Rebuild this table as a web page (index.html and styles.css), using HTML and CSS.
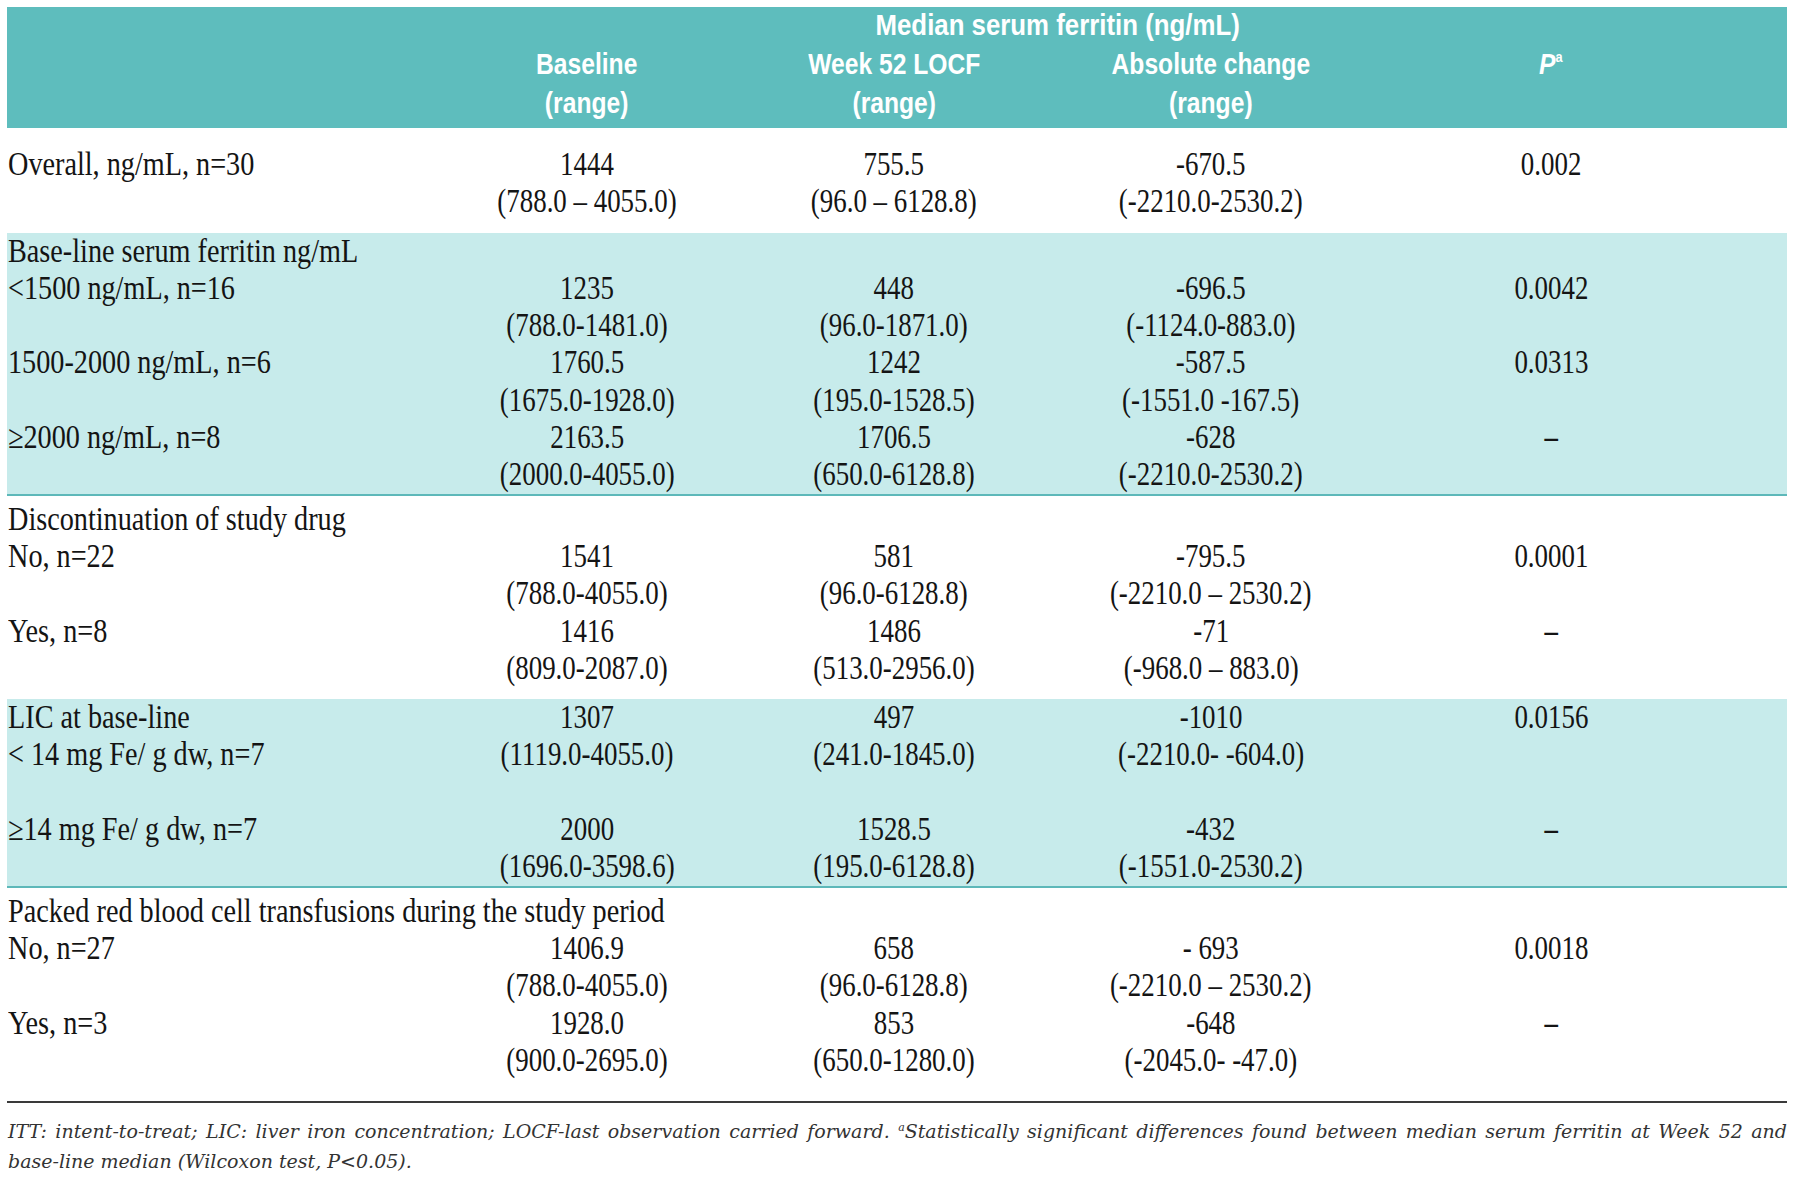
FILE: index.html
```html
<!DOCTYPE html>
<html>
<head>
<meta charset="utf-8">
<link rel="stylesheet" href="styles.css">
</head>
<body>
<div class="doc">
  <div class="thead">
    <div class="cols hrow-top">
      <div class="hspan"><span class="h hm">Median serum ferritin (ng/mL)</span></div>
    </div>
    <div class="cols hrow">
      <div></div>
      <div class="hc"><span class="h">Baseline<br>(range)</span></div>
      <div class="hc"><span class="h">Week 52 LOCF<br>(range)</span></div>
      <div class="hc"><span class="h">Absolute change<br>(range)</span></div>
      <div class="hc"><span class="h"><i>P</i><sup class="hsup">a</sup></span></div>
    </div>
  </div>

  <div class="sec s1">
    <div class="cols">
      <div class="lab"><span class="t">Overall, ng/mL, n=30</span></div>
      <div class="num"><span class="n">1444<br>(788.0 – 4055.0)</span></div>
      <div class="num"><span class="n">755.5<br>(96.0 – 6128.8)</span></div>
      <div class="num"><span class="n">-670.5<br>(-2210.0-2530.2)</span></div>
      <div class="num"><span class="n">0.002</span></div>
    </div>
  </div>

  <div class="sec tint s2">
    <div class="full"><span class="t">Base-line serum ferritin ng/mL</span></div>
    <div class="cols">
      <div class="lab"><span class="t">&lt;1500 ng/mL, n=16</span></div>
      <div class="num"><span class="n">1235<br>(788.0-1481.0)</span></div>
      <div class="num"><span class="n">448<br>(96.0-1871.0)</span></div>
      <div class="num"><span class="n">-696.5<br>(-1124.0-883.0)</span></div>
      <div class="num"><span class="n">0.0042</span></div>
    </div>
    <div class="cols">
      <div class="lab"><span class="t">1500-2000 ng/mL, n=6</span></div>
      <div class="num"><span class="n">1760.5<br>(1675.0-1928.0)</span></div>
      <div class="num"><span class="n">1242<br>(195.0-1528.5)</span></div>
      <div class="num"><span class="n">-587.5<br>(-1551.0 -167.5)</span></div>
      <div class="num"><span class="n">0.0313</span></div>
    </div>
    <div class="cols">
      <div class="lab"><span class="t">≥2000 ng/mL, n=8</span></div>
      <div class="num"><span class="n">2163.5<br>(2000.0-4055.0)</span></div>
      <div class="num"><span class="n">1706.5<br>(650.0-6128.8)</span></div>
      <div class="num"><span class="n">-628<br>(-2210.0-2530.2)</span></div>
      <div class="num"><span class="n dash">–</span></div>
    </div>
  </div>

  <div class="sec s3">
    <div class="full"><span class="t">Discontinuation of study drug</span></div>
    <div class="cols">
      <div class="lab"><span class="t">No, n=22</span></div>
      <div class="num"><span class="n">1541<br>(788.0-4055.0)</span></div>
      <div class="num"><span class="n">581<br>(96.0-6128.8)</span></div>
      <div class="num"><span class="n">-795.5<br>(-2210.0 – 2530.2)</span></div>
      <div class="num"><span class="n">0.0001</span></div>
    </div>
    <div class="cols">
      <div class="lab"><span class="t">Yes, n=8</span></div>
      <div class="num"><span class="n">1416<br>(809.0-2087.0)</span></div>
      <div class="num"><span class="n">1486<br>(513.0-2956.0)</span></div>
      <div class="num"><span class="n">-71<br>(-968.0 – 883.0)</span></div>
      <div class="num"><span class="n dash">–</span></div>
    </div>
  </div>

  <div class="sec tint s4">
    <div class="cols">
      <div class="lab"><span class="t">LIC at base-line<br>&lt; 14 mg Fe/ g dw, n=7</span></div>
      <div class="num"><span class="n">1307<br>(1119.0-4055.0)</span></div>
      <div class="num"><span class="n">497<br>(241.0-1845.0)</span></div>
      <div class="num"><span class="n">-1010<br>(-2210.0- -604.0)</span></div>
      <div class="num"><span class="n">0.0156</span></div>
    </div>
    <div class="blank"></div>
    <div class="cols">
      <div class="lab"><span class="t">≥14 mg Fe/ g dw, n=7</span></div>
      <div class="num"><span class="n">2000<br>(1696.0-3598.6)</span></div>
      <div class="num"><span class="n">1528.5<br>(195.0-6128.8)</span></div>
      <div class="num"><span class="n">-432<br>(-1551.0-2530.2)</span></div>
      <div class="num"><span class="n dash">–</span></div>
    </div>
  </div>

  <div class="sec s5">
    <div class="full"><span class="t">Packed red blood cell transfusions during the study period</span></div>
    <div class="cols">
      <div class="lab"><span class="t">No, n=27</span></div>
      <div class="num"><span class="n">1406.9<br>(788.0-4055.0)</span></div>
      <div class="num"><span class="n">658<br>(96.0-6128.8)</span></div>
      <div class="num"><span class="n">- 693<br>(-2210.0 – 2530.2)</span></div>
      <div class="num"><span class="n">0.0018</span></div>
    </div>
    <div class="cols">
      <div class="lab"><span class="t">Yes, n=3</span></div>
      <div class="num"><span class="n">1928.0<br>(900.0-2695.0)</span></div>
      <div class="num"><span class="n">853<br>(650.0-1280.0)</span></div>
      <div class="num"><span class="n">-648<br>(-2045.0- -47.0)</span></div>
      <div class="num"><span class="n dash">–</span></div>
    </div>
  </div>

  <div class="foot">
    <div class="fl1">ITT: intent-to-treat; LIC: liver iron concentration; LOCF-last observation carried forward. <sup class="fsup">a</sup>Statistically significant differences found between median serum ferritin at Week 52 and</div>
    <div class="fl2">base-line median (Wilcoxon test, P&lt;0.05).</div>
  </div>
</div>
</body>
</html>
```

FILE: styles.css
```css
html, body {
  margin: 0;
  padding: 0;
  background: #ffffff;
}

.doc {
  margin: 7px 0 0 7px;
  width: 1780px;
  font-family: "Liberation Serif", "Times New Roman", serif;
  color: #141414;
}

.cols {
  display: grid;
  grid-template-columns: 430px 300px 314px 320px 360px 56px;
}

/* header */
.thead {
  background: #5ebdbd;
  color: #ffffff;
  font-family: "Liberation Sans", Arial, sans-serif;
  font-weight: bold;
  font-size: 29px;
  height: 121px;
  box-sizing: border-box;
}

.hrow-top {
  line-height: 37px;
}

.hspan {
  grid-column: 2 / 6;
  text-align: center;
  padding-right: 52px;
}

.hrow {
  line-height: 39px;
  padding-top: 1px;
}

.hc {
  text-align: center;
}

.h {
  display: inline-block;
  transform: scaleX(0.85);
  transform-origin: center;
  white-space: nowrap;
}

.hm {
  transform: scaleX(0.89);
}

.hsup {
  font-size: 15px;
  vertical-align: 12px;
  line-height: 0;
}

/* body sections */
.sec {
  font-size: 33px;
  line-height: 37.3px;
}

.tint {
  background: #c7ebeb;
}

.s1 {
  padding: 18px 0 12px;
}

.s2 {
  border-bottom: 2px solid #5db8b9;
}

.s3 {
  padding: 5px 0 12px;
}

.s4 {
  border-bottom: 2px solid #5db8b9;
}

.s5 {
  padding: 5px 0 22px;
  border-bottom: 2px solid #3a3a3a;
}

.full {
  padding-left: 1px;
  white-space: nowrap;
}

.lab {
  padding-left: 1px;
  white-space: nowrap;
}

.num {
  text-align: center;
  white-space: nowrap;
}

.t {
  display: inline-block;
  transform: scaleX(0.855);
  transform-origin: left center;
  white-space: nowrap;
}

.n {
  display: inline-block;
  transform: scaleX(0.815);
  transform-origin: center;
  white-space: nowrap;
}

.dash {
  font-weight: bold;
}

.blank {
  height: 37.3px;
}

/* footnote */
.foot {
  font-family: "DejaVu Serif", serif;
  font-style: italic;
  font-size: 19px;
  color: #333333;
  line-height: 30px;
  padding: 13px 0 0 1px;
}

.fl1 {
  text-align: justify;
  text-align-last: justify;
}

.fsup {
  font-size: 11px;
  vertical-align: 7px;
  line-height: 0;
}
```
